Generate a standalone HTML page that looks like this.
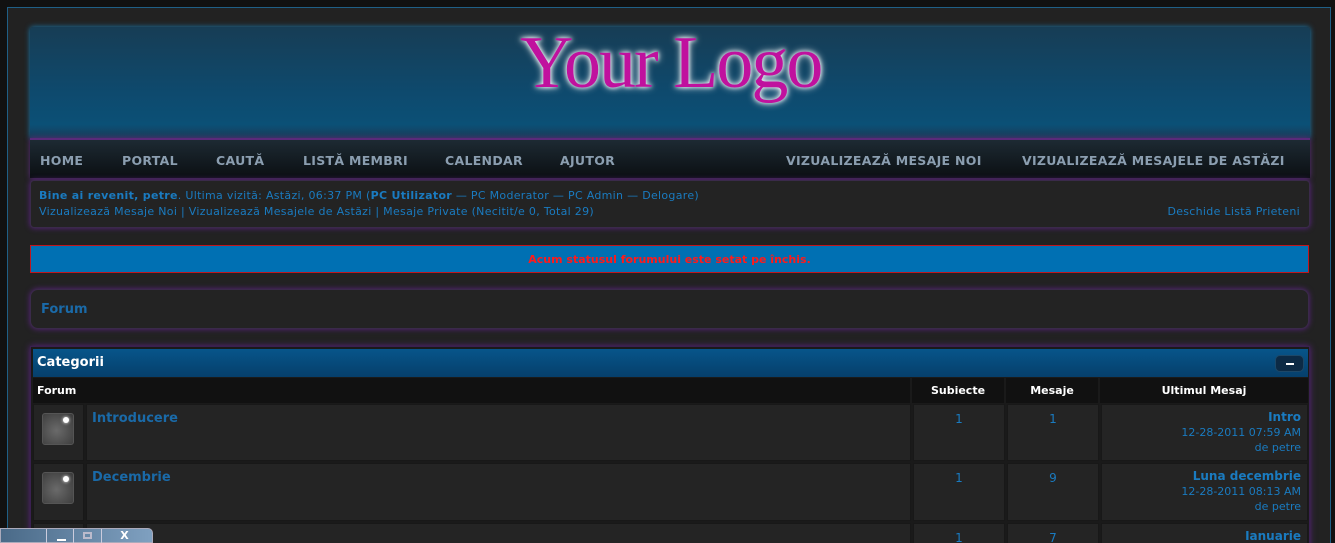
<!DOCTYPE html>
<html><head><meta charset="utf-8"><style>
*{margin:0;padding:0;box-sizing:border-box}
html,body{width:1335px;height:543px;overflow:hidden}
body{background:#111;font-family:Verdana,"DejaVu Sans",sans-serif;font-size:11px;color:#1a7bc0;position:relative}
.abs{position:absolute}
#wrap{left:7px;top:7px;width:1324px;height:536px;background:#222;border:1px solid #1f5f86;border-bottom:none}
#hdr{left:30px;top:27px;width:1280px;height:111px;background:linear-gradient(#173d55 0%,#0e4a6e 60%,#0b5076 88%,#1a3c58 100%);box-shadow:0 0 6px #1a7bb0;border-radius:3px 3px 0 0}
#logo{left:490px;top:-6px;font-family:"Liberation Serif",serif;font-size:74px;color:#c0119e;text-shadow:0 0 4px #fff,0 0 8px #fff;letter-spacing:-2px}
#nav{left:30px;top:138px;width:1280px;height:40px;background:linear-gradient(#1d2a33,#0b0f12);border-top:2px solid #5a2a7a;box-shadow:0 0 5px #5a2a7a}
#nav span{position:absolute;top:13px;font-family:"DejaVu Sans",sans-serif;font-weight:bold;font-size:12.5px;color:#8b9eb0;letter-spacing:0.3px}
.box{background:#232323;border:1px solid #3a2a4a;box-shadow:0 0 6px #5a2380;border-radius:4px}
#wel{left:30px;top:180px;width:1280px;height:48px;letter-spacing:0.3px}
#red{left:30px;top:245px;width:1279px;height:28px;background:#0070b3;border:1px solid #c0161e;text-align:center;color:#ff1a1a;font-weight:bold;font-size:11px;line-height:27px}
#forum{left:30px;top:289px;width:1279px;height:40px;border-radius:8px;font-weight:bold;font-size:13px;color:#1a6aa8;padding:12px 0 0 10px}
#tbl{left:30px;top:346px;width:1280px;height:210px;background:#1a1a1a;border:1px solid #3a2050;box-shadow:0 0 6px #5a2380}
#cat{left:2px;top:2px;width:1275px;height:28px;background:linear-gradient(#07558a,#063f6b);color:#fff;font-weight:bold;font-size:13px;padding:6px 4px}
#min{left:1242px;top:6px;width:29px;height:17px;background:#0c2a45;border:1px solid #1d4868;border-radius:5px}
#min:after{content:"";position:absolute;left:10px;top:7px;width:8px;height:2px;background:#fff}
.th{top:31px;height:25px;background:#111;color:#fff;font-weight:bold;font-size:11px;line-height:25px;text-align:center}
.c{background:#242424;border:1px solid #181818}
.n{color:#1a7bc0;font-size:12px;text-align:center}
.ic{width:32px;height:32px;border-radius:3px;background:radial-gradient(circle at 45% 55%,#6a6a6a,#3a3a3a);border:1px solid #555}
.ic:after{content:"";position:absolute;right:4px;top:3px;width:6px;height:6px;border-radius:50%;background:#fff;box-shadow:0 0 3px #fff}
.t{font-weight:bold;font-size:13px;color:#1a6aa8}
.lm{text-align:right;font-size:11px;line-height:15px;color:#1a7bc0}
</style></head><body>
<div id="wrap" class="abs"></div>
<div id="hdr" class="abs"><div id="logo" class="abs">Your Logo</div></div>
<div id="nav" class="abs">
<span style="left:10px">HOME</span><span style="left:92px">PORTAL</span><span style="left:186px">CAUTĂ</span><span style="left:273px">LISTĂ MEMBRI</span><span style="left:415px">CALENDAR</span><span style="left:530px">AJUTOR</span>
<span style="left:756px">VIZUALIZEAZĂ MESAJE NOI</span><span style="left:992px">VIZUALIZEAZĂ MESAJELE DE ASTĂZI</span></div>
<div id="wel" class="abs box">
<div class="abs" style="left:8px;top:8px;white-space:nowrap"><b>Bine ai revenit, petre</b>. Ultima vizită: Astăzi, 06:37 PM (<b>PC Utilizator</b> — PC Moderator — PC Admin — Delogare)</div>
<div class="abs" style="left:8px;top:24px;white-space:nowrap">Vizualizează Mesaje Noi | Vizualizează Mesajele de Astăzi | Mesaje Private (Necitit/e 0, Total 29)</div>
<div class="abs" style="right:9px;top:24px">Deschide Listă Prieteni</div></div>
<div id="red" class="abs">Acum statusul forumului este setat pe închis.</div>
<div id="forum" class="abs box">Forum</div>
<div id="tbl" class="abs">
<div id="cat" class="abs">Categorii<div id="min" class="abs"></div></div>
<div class="abs th" style="left:2px;width:877px;text-align:left;padding-left:4px">Forum</div>
<div class="abs th" style="left:881px;width:92px">Subiecte</div>
<div class="abs th" style="left:975px;width:92px">Mesaje</div>
<div class="abs th" style="left:1069px;width:208px">Ultimul Mesaj</div>

<div class="abs c" style="left:2px;top:57px;width:51px;height:57px"><div class="abs ic" style="left:8px;top:8px"></div></div>
<div class="abs c t" style="left:55px;top:57px;width:825px;height:57px;padding:6px 5px">Introducere</div>
<div class="abs c n" style="left:882px;top:57px;width:92px;height:57px;padding-top:7px">1</div>
<div class="abs c n" style="left:976px;top:57px;width:92px;height:57px;padding-top:7px">1</div>
<div class="abs c lm" style="left:1070px;top:57px;width:207px;height:57px;padding:5px 6px"><b style="font-size:12px">Intro</b><br>12-28-2011 07:59 AM<br>de petre</div>

<div class="abs c" style="left:2px;top:116px;width:51px;height:58px"><div class="abs ic" style="left:8px;top:8px"></div></div>
<div class="abs c t" style="left:55px;top:116px;width:825px;height:58px;padding:6px 5px">Decembrie</div>
<div class="abs c n" style="left:882px;top:116px;width:92px;height:58px;padding-top:7px">1</div>
<div class="abs c n" style="left:976px;top:116px;width:92px;height:58px;padding-top:7px">9</div>
<div class="abs c lm" style="left:1070px;top:116px;width:207px;height:58px;padding:5px 6px"><b style="font-size:12px">Luna decembrie</b><br>12-28-2011 08:13 AM<br>de petre</div>

<div class="abs c" style="left:2px;top:176px;width:51px;height:40px"></div>
<div class="abs c t" style="left:55px;top:176px;width:825px;height:40px"></div>
<div class="abs c n" style="left:882px;top:176px;width:92px;height:40px;padding-top:7px">1</div>
<div class="abs c n" style="left:976px;top:176px;width:92px;height:40px;padding-top:7px">7</div>
<div class="abs c lm" style="left:1070px;top:176px;width:207px;height:40px;padding:5px 6px"><b style="font-size:12px">Ianuarie</b></div>
</div>
<div class="abs" style="left:0;top:528px;width:153px;height:15px;background:linear-gradient(90deg,#4a6a88,#7fa0c0);border:1px solid #aab;border-radius:0 5px 0 0">
<div class="abs" style="left:45px;top:0;width:28px;height:15px;border-left:1px solid #ccd;border-right:1px solid #ccd"><div class="abs" style="left:10px;top:10px;width:9px;height:2px;background:#fff"></div></div>
<div class="abs" style="left:82px;top:3px;width:9px;height:7px;border:2px solid #bbc"></div>
<div class="abs" style="left:100px;top:0;width:46px;height:15px;border-left:1px solid #ccd;color:#fff;font-weight:bold;text-align:center;font-size:11px;line-height:14px">X</div></div>
</body></html>
